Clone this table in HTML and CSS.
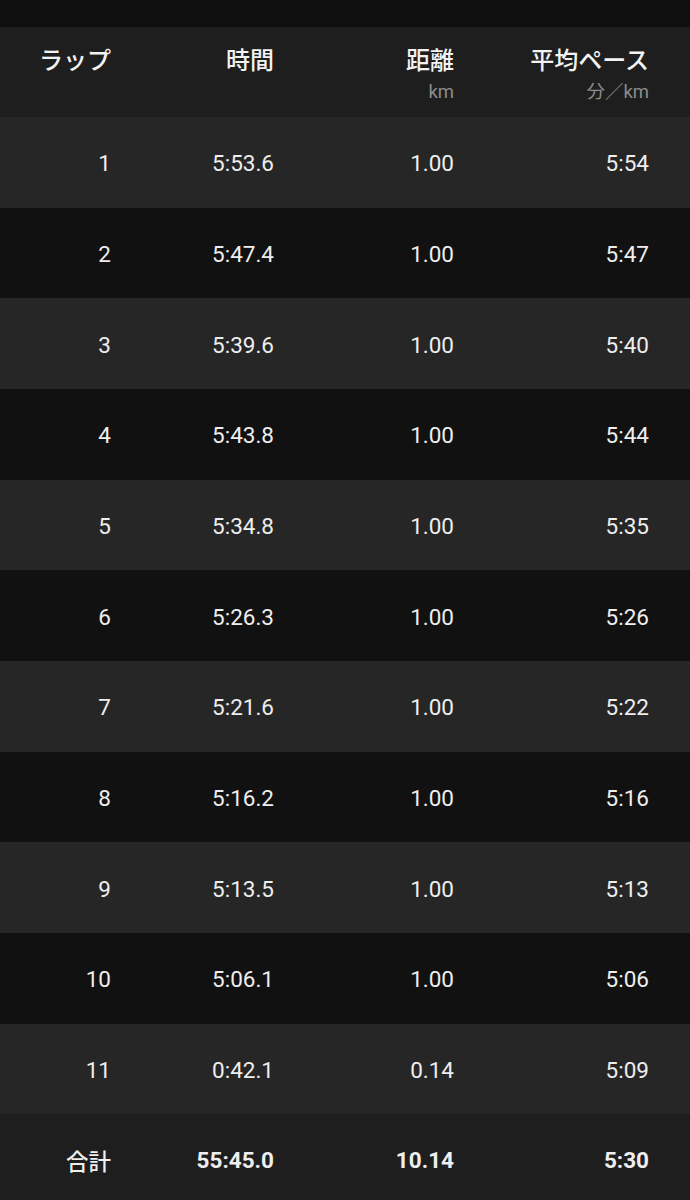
FILE: index.html
```html
<!DOCTYPE html>
<html lang="ja">
<head>
<meta charset="utf-8">
<link rel="stylesheet" href="styles.css">
</head>
<body>
<div class="topbar"></div>
<div class="table">
  <div class="row head">
    <div class="cell"><span class="title">ラップ</span></div>
    <div class="cell"><span class="title">時間</span></div>
    <div class="cell"><span class="title">距離</span><span class="sub">km</span></div>
    <div class="cell"><span class="title">平均ペース</span><span class="sub">分／km</span></div>
  </div>
  <div class="row odd"><div class="cell">1</div><div class="cell">5:53.6</div><div class="cell">1.00</div><div class="cell">5:54</div></div>
  <div class="row even"><div class="cell">2</div><div class="cell">5:47.4</div><div class="cell">1.00</div><div class="cell">5:47</div></div>
  <div class="row odd"><div class="cell">3</div><div class="cell">5:39.6</div><div class="cell">1.00</div><div class="cell">5:40</div></div>
  <div class="row even"><div class="cell">4</div><div class="cell">5:43.8</div><div class="cell">1.00</div><div class="cell">5:44</div></div>
  <div class="row odd"><div class="cell">5</div><div class="cell">5:34.8</div><div class="cell">1.00</div><div class="cell">5:35</div></div>
  <div class="row even"><div class="cell">6</div><div class="cell">5:26.3</div><div class="cell">1.00</div><div class="cell">5:26</div></div>
  <div class="row odd"><div class="cell">7</div><div class="cell">5:21.6</div><div class="cell">1.00</div><div class="cell">5:22</div></div>
  <div class="row even"><div class="cell">8</div><div class="cell">5:16.2</div><div class="cell">1.00</div><div class="cell">5:16</div></div>
  <div class="row odd"><div class="cell">9</div><div class="cell">5:13.5</div><div class="cell">1.00</div><div class="cell">5:13</div></div>
  <div class="row even"><div class="cell">10</div><div class="cell">5:06.1</div><div class="cell">1.00</div><div class="cell">5:06</div></div>
  <div class="row odd"><div class="cell">11</div><div class="cell">0:42.1</div><div class="cell">0.14</div><div class="cell">5:09</div></div>
  <div class="row total"><div class="cell label">合計</div><div class="cell">55:45.0</div><div class="cell">10.14</div><div class="cell">5:30</div></div>
</div>
</body>
</html>
```
FILE: styles.css
```css
html, body {
  margin: 0;
  padding: 0;
  background: #1e1e1e;
  color: #eeeeee;
  font-family: Roboto, "Noto Sans CJK JP", sans-serif;
}
.topbar {
  height: 27px;
  background: #0f0f0f;
}
.row {
  display: grid;
  grid-template-columns: 111px 163px 180px 195px;
  padding-right: 41px;
  padding-top: 2px;
  box-sizing: border-box;
  height: 90.67px;
  align-items: center;
  font-size: 22.5px;
}
.cell {
  text-align: right;
  white-space: nowrap;
}
.head {
  height: 90px;
  padding-top: 0;
  align-items: start;
  background: #1e1e1e;
}
.head .cell {
  display: flex;
  flex-direction: column;
  align-items: flex-end;
  padding-top: 20px;
}
.title {
  font-size: 24px;
  line-height: 28px;
  font-weight: 500;
  color: #f2f2f2;
}
.sub {
  font-size: 18.5px;
  line-height: 22px;
  margin-top: 6px;
  color: #8c8c8c;
}
.odd { background: #262626; }
.even { background: #111111; }
.total {
  background: #1e1e1e;
  font-weight: 700;
  height: 92px;
  padding-top: 0;
}
.total .label {
  font-weight: 500;
}
```
